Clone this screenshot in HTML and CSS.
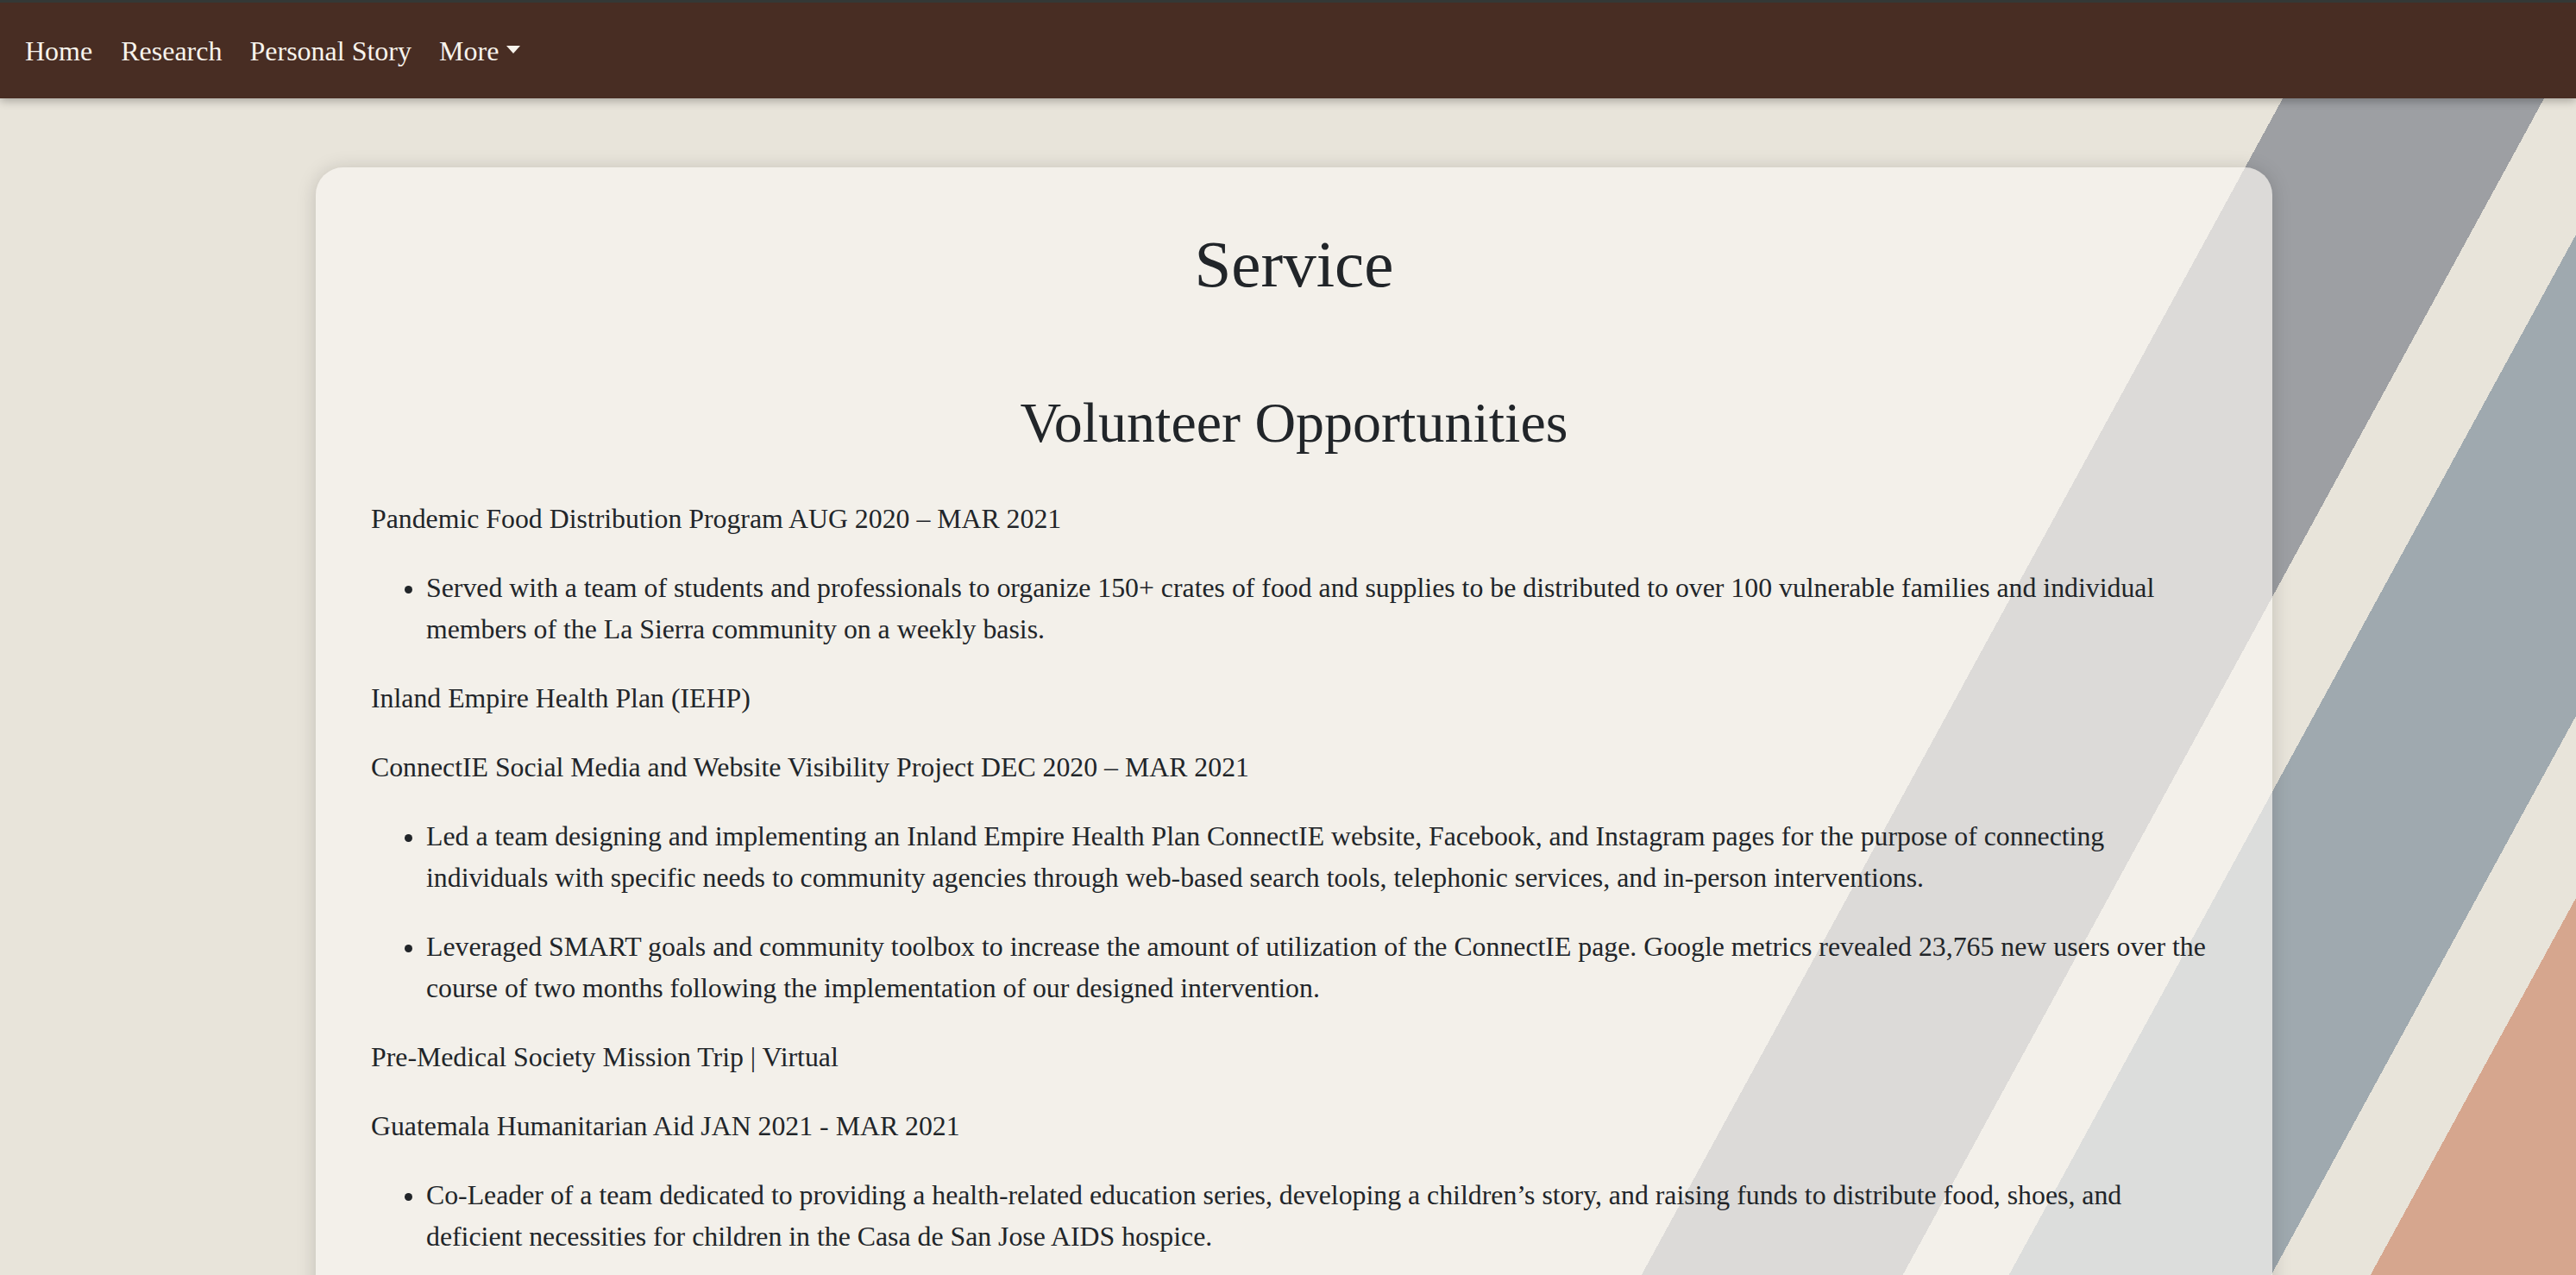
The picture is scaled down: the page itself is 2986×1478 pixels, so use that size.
FILE: index.html
```html
<!DOCTYPE html>
<html lang="en">
<head>
<meta charset="utf-8">
<title>Service</title>
<link rel="stylesheet" href="styles.css">
</head>
<body>
<nav class="navbar">
  <a class="nav-link" href="#">Home</a>
  <a class="nav-link" href="#">Research</a>
  <a class="nav-link" href="#">Personal Story</a>
  <a class="nav-link dropdown-toggle" href="#">More</a>
</nav>
<main class="page">
  <section class="card">
    <h1 class="title">Service</h1>
    <h2 class="subtitle">Volunteer Opportunities</h2>
    <p>Pandemic Food Distribution Program AUG 2020 – MAR 2021</p>
    <ul>
      <li>Served with a team of students and professionals to organize 150+ crates of food and supplies to be distributed to over 100 vulnerable families and individual members of the La Sierra community on a weekly basis.</li>
    </ul>
    <p>Inland Empire Health Plan (IEHP)</p>
    <p>ConnectIE Social Media and Website Visibility Project DEC 2020 – MAR 2021</p>
    <ul>
      <li>Led a team designing and implementing an Inland Empire Health Plan ConnectIE website, Facebook, and Instagram pages for the purpose of connecting individuals with specific needs to community agencies through web-based search tools, telephonic services, and in-person interventions.</li>
      <li>Leveraged SMART goals and community toolbox to increase the amount of utilization of the ConnectIE page. Google metrics revealed 23,765 new users over the course of two months following the implementation of our designed intervention.</li>
    </ul>
    <p>Pre-Medical Society Mission Trip | Virtual</p>
    <p>Guatemala Humanitarian Aid JAN 2021 - MAR 2021</p>
    <ul>
      <li>Co-Leader of a team dedicated to providing a health-related education series, developing a children’s story, and raising funds to distribute food, shoes, and deficient necessities for children in the Casa de San Jose AIDS hospice.</li>
    </ul>
  </section>
</main>
</body>
</html>
```

FILE: styles.css
```css
html, body {
  margin: 0;
  padding: 0;
}

body {
  font-family: "Liberation Serif", "Times New Roman", serif;
  color: #212529;
  background-color: #e8e4da;
  background-image: linear-gradient(118.59deg,
    #e8e4da 0px, #e8e4da 2378px,
    #9d9fa3 2378px, #9d9fa3 2644px,
    #e8e4da 2644px, #e8e4da 2752px,
    #9fa9af 2752px, #9fa9af 3019px,
    #e8e4da 3019px, #e8e4da 3120px,
    #d6a68e 3120px, #d6a68e 3400px);
  background-attachment: fixed;
  background-repeat: no-repeat;
}

.navbar {
  position: relative;
  z-index: 2;
  box-sizing: border-box;
  height: 114px;
  display: flex;
  align-items: center;
  padding: 0 13px;
  background: #482d23;
  border-top: 3px solid #343836;
  box-shadow: 0 3px 10px rgba(0, 0, 0, 0.28);
}

.nav-link {
  font-size: 32px;
  line-height: 48px;
  padding: 0 16px;
  color: #f7f3ec;
  text-decoration: none;
}

.nav-link:first-child {
  padding-right: 17px;
}

.dropdown-toggle::after {
  content: "";
  display: inline-block;
  margin-left: 9px;
  vertical-align: 8px;
  border-top: 9px solid #f7f3ec;
  border-left: 8.5px solid transparent;
  border-right: 8.5px solid transparent;
}

.page {
  padding: 80px 352px 0 366px;
}

.card {
  background: rgba(248, 245, 240, 0.69);
  border-radius: 32px;
  padding: 67px 64px 64px;
  box-shadow: 0 2px 22px rgba(0, 0, 0, 0.17);
}

.title {
  margin: 0 0 99px;
  font-size: 77px;
  line-height: 91px;
  font-weight: 400;
  text-align: center;
}

.subtitle {
  margin: 0 0 49px;
  font-size: 66px;
  line-height: 78px;
  font-weight: 400;
  text-align: center;
}

.card p,
.card li {
  font-size: 31.8px;
  line-height: 48px;
}

.card p {
  margin: 0 0 32px;
}

.card ul {
  margin: 0 0 32px;
  padding: 0 6px 0 64px;
}

.card li + li {
  margin-top: 32px;
}
```
